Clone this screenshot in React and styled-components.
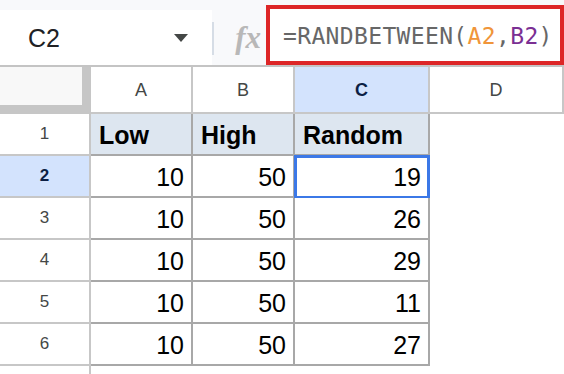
import React from "react";
import styled, { createGlobalStyle } from "styled-components";

const GlobalStyle = createGlobalStyle`
    body {
        margin: 0;
        background: #ffffff;
        overflow: hidden;
        font-family: "Liberation Sans", Arial, sans-serif;
    }
`;

const Page = styled.div`
    width: 564px;
    height: 374px;
    overflow: hidden;
    background: #ffffff;
`;

// Formula bar
const TopBar = styled.div`
    display: flex;
    height: 65px;
    background: #f8f9fb;
`;

const NameBox = styled.div`
    display: flex;
    align-items: center;
    width: 212px;
    margin-top: 10px;
    padding-left: 28px;
    box-sizing: border-box;
    background: #ffffff;
    font-size: 25px;
    color: #202124;
`;

const CellRef = styled.span`
    flex: 1;
    padding-top: 2px;
`;

const Caret = styled.span`
    width: 0;
    height: 0;
    margin-right: 24px;
    border-left: 7.5px solid transparent;
    border-right: 7.5px solid transparent;
    border-top: 8px solid #444746;
`;

const Divider = styled.div`
    width: 2px;
    margin: 22px 0 10px;
    background: #d6dde6;
`;

const FxLabel = styled.div`
    display: flex;
    align-items: center;
    justify-content: flex-end;
    width: 52px;
    padding: 10px 5px 0 0;
    box-sizing: border-box;
    font-family: "Liberation Serif", "Times New Roman", serif;
    font-style: italic;
    font-weight: bold;
    font-size: 31px;
    color: #b8b8b8;
`;

const FormulaBox = styled.div`
    flex: 1;
    display: flex;
    align-items: center;
    margin-top: 5px;
    padding: 2px 0 0 13px;
    border: 4px solid #dd2627;
    background: #ffffff;
    font-family: "DejaVu Sans Mono", "Liberation Mono", monospace;
    font-size: 23px;
    letter-spacing: 0.35px;
    color: #676767;
    white-space: nowrap;
`;

const Ref = styled.span`
    color: ${p => p.$color};
`;

// Grid
const Sheet = styled.div`
    display: grid;
    grid-template-columns: 91px 102px 102px 135px 1fr;
    grid-template-rows: 47px repeat(7, 42px);
    border-top: 2px solid #c4c4c4;
`;

const Corner = styled.div`
    background: #f8f8f8;
    border-right: 9px solid #c6c6c6;
    border-bottom: 9px solid #c6c6c6;
`;

const ColHead = styled.div`
    display: flex;
    align-items: center;
    justify-content: center;
    padding-top: 2px;
    background: ${p => (p.$active ? "#d3e3fd" : "#ffffff")};
    border-right: 2px solid #c7c7c7;
    border-bottom: 2px solid #c7c7c7;
    font-size: 18px;
    font-weight: ${p => (p.$active ? "bold" : "normal")};
    color: ${p => (p.$active ? "#0b1f44" : "#444746")};
`;

const RowHead = styled.div`
    display: flex;
    align-items: center;
    justify-content: center;
    padding-bottom: 1px;
    background: ${p => (p.$active ? "#d3e3fd" : "#ffffff")};
    border-right: 2px solid #c7c7c7;
    border-bottom: ${p => (p.$last ? "none" : "2px solid #c7c7c7")};
    font-size: 17px;
    font-weight: ${p => (p.$active ? "bold" : "normal")};
    color: ${p => (p.$active ? "#0b1f44" : "#444746")};
`;

const Cell = styled.div`
    position: relative;
    display: flex;
    align-items: flex-end;
    justify-content: ${p => (p.$header ? "flex-start" : "flex-end")};
    padding: 0 7px 4px 8px;
    background: ${p => (p.$header ? "#dde6f0" : "#ffffff")};
    border-right: 2px solid #a8a8a8;
    border-bottom: 2px solid #a8a8a8;
    font-size: 25px;
    font-weight: ${p => (p.$header ? "bold" : "normal")};
    color: #000000;

    ${p => p.$selected && `
        &::after {
            content: "";
            position: absolute;
            top: -1px;
            left: -1px;
            right: -2px;
            bottom: -3px;
            border: 3px solid #3b78e7;
        }
    `}
`;

const Blank = styled.div``;

const header = ["Low", "High", "Random"];
const rows = [
    [10, 50, 19],
    [10, 50, 26],
    [10, 50, 29],
    [10, 50, 11],
    [10, 50, 27],
];

const App = () => {
    return (
        <Page>
            <GlobalStyle />
            <TopBar>
                <NameBox>
                    <CellRef>C2</CellRef>
                    <Caret />
                </NameBox>
                <Divider />
                <FxLabel>fx</FxLabel>
                <FormulaBox>
                    =RANDBETWEEN(<Ref $color="#f0953a">A2</Ref>,<Ref $color="#7b2f93">B2</Ref>)
                </FormulaBox>
            </TopBar>

            <Sheet>
                <Corner />
                {["A", "B", "C", "D"].map(col => (
                    <ColHead key={col} $active={col === "C"}>{col}</ColHead>
                ))}

                <RowHead>1</RowHead>
                {header.map(title => (
                    <Cell key={title} $header>{title}</Cell>
                ))}
                <Blank />

                {rows.map((row, i) => (
                    <React.Fragment key={i}>
                        <RowHead $active={i === 0}>{i + 2}</RowHead>
                        {row.map((value, j) => (
                            <Cell key={j} $selected={i === 0 && j === 2}>{value}</Cell>
                        ))}
                        <Blank />
                    </React.Fragment>
                ))}

                <RowHead $last />
            </Sheet>
        </Page>
    );
};

export default App;
